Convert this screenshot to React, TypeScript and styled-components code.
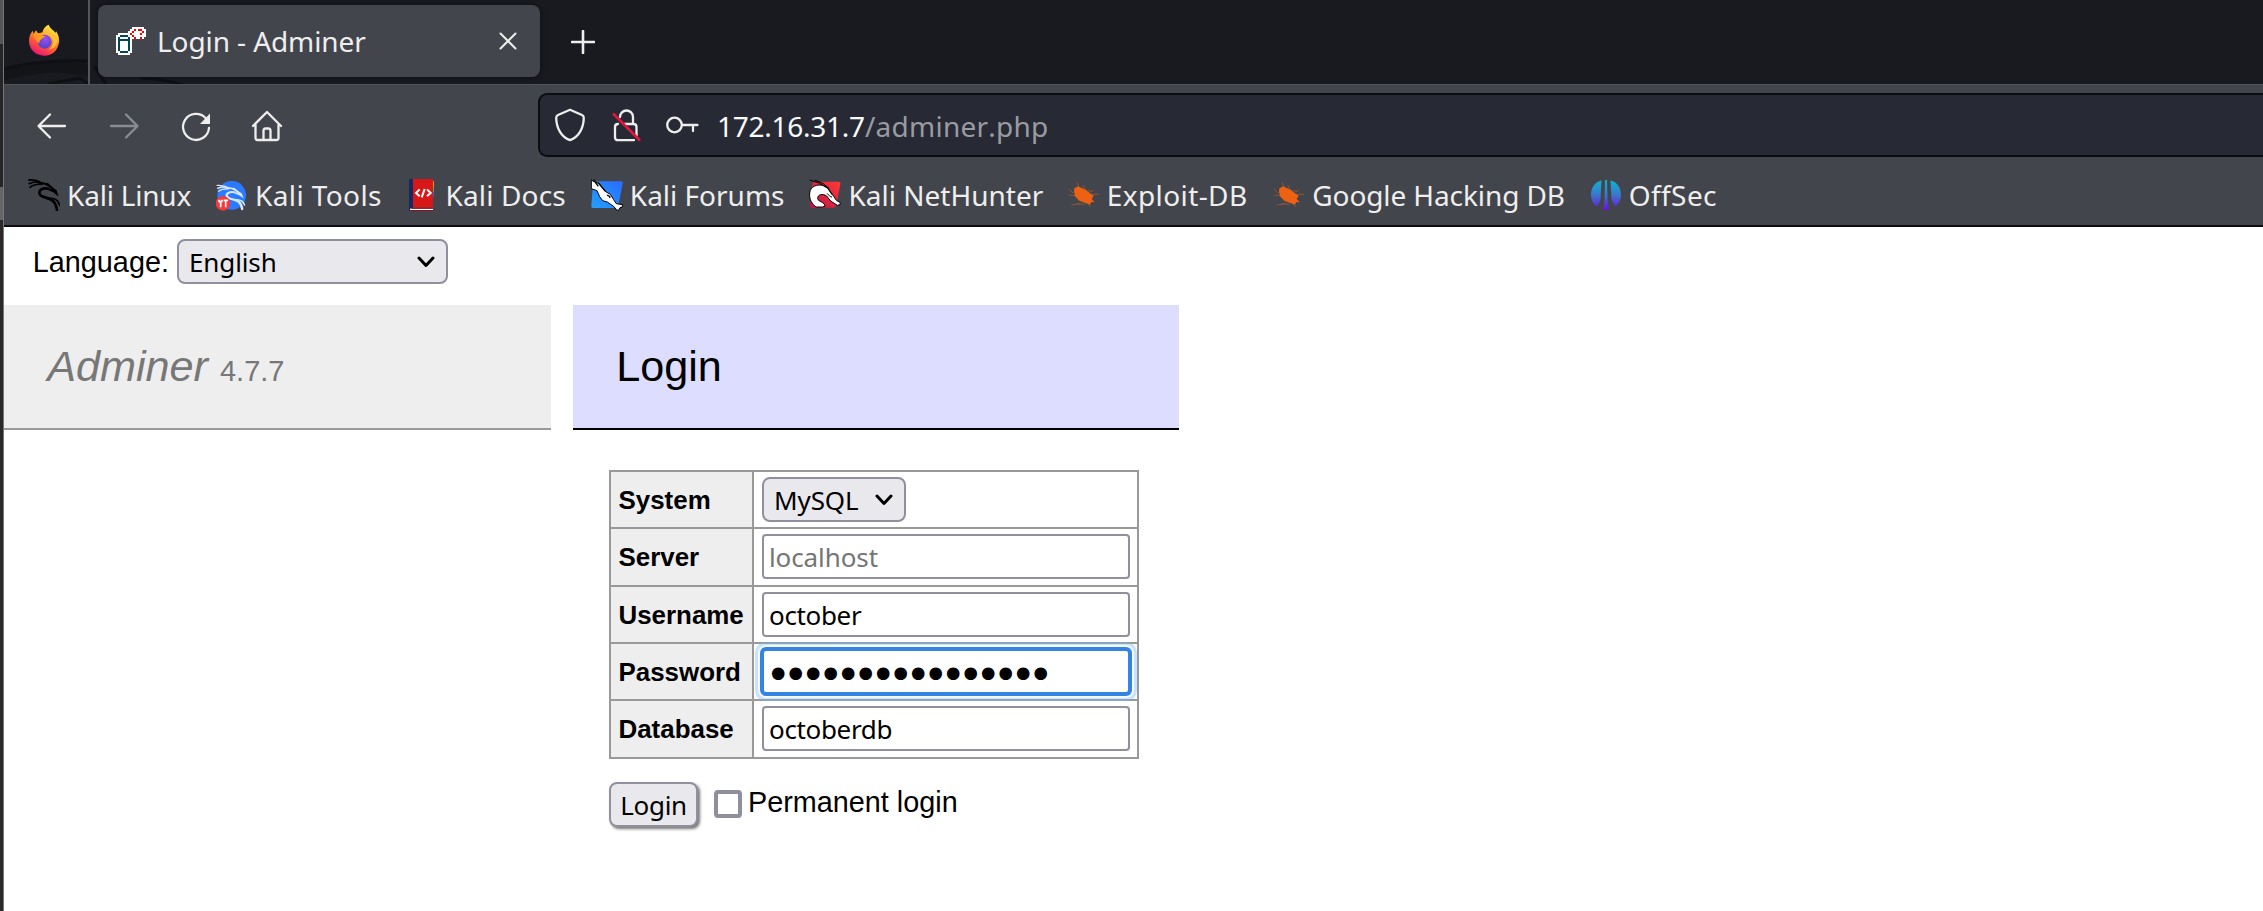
import React from "react";
import styled, { createGlobalStyle } from "styled-components";

const Global = createGlobalStyle`
  * { box-sizing: border-box; }
  body { margin: 0; background: #fff; overflow: hidden; }
  svg { display: block; flex: none; }
`;

const ui = `"Noto Sans", sans-serif`;
const sans = `"Liberation Sans", Arial, sans-serif`;

const Screen = styled.div`
  display: flex;
  width: 2263px;
  height: 911px;
  overflow: hidden;
`;
const DesktopEdge = styled.div`
  flex: none;
  width: 4px;
  border-right: 1px solid #777;
  background: linear-gradient(#565656 0 44px, #262628 44px 187px, #666 187px 220px, #2b2928 220px);
`;
const Browser = styled.div`
  flex: 1;
  display: flex;
  flex-direction: column;
  min-width: 0;
`;

/* tab strip */
const TabStrip = styled.div`
  height: 84px;
  display: flex;
  background: #191a1f;
  position: relative;
`;
const Wallpaper = styled.svg`
  position: absolute;
  left: 0;
  top: 54px;
`;
const FirefoxView = styled.div`
  position: relative;
  width: 86px;
  padding: 24px 0 0 24px;
  border-right: 2px solid #55565b;
`;
const Tab = styled.div`
  position: relative;
  margin: 5px 0 0 8px;
  flex: 0 0 442px;
  height: 72px;
  border-radius: 8px;
  background: #43454d;
  box-shadow: 0 0 5px rgba(0, 0, 0, 0.55);
  display: flex;
  align-items: center;
  padding: 0 23px 0 18px;
`;
const TabTitle = styled.span`
  flex: 1;
  margin-left: 9px;
  font: 28px ${ui};
  line-height: 38px;
  letter-spacing: -0.1px;
  color: #eeeeec;
`;
const NewTab = styled.div`
  padding: 30px 0 0 31px;
`;

/* navigation */
const NavBar = styled.div`
  height: 83px;
  flex: none;
  display: flex;
  background: #43454d;
  border-top: 1px solid #50525a;
  padding-top: 8px;
`;
const NavIcons = styled.div`
  width: 534px;
  display: flex;
  gap: 32px;
  padding: 13px 0 0 28px;
`;
const UrlBar = styled.div`
  flex: 1;
  height: 64px;
  border: 2px solid #0c0d11;
  border-right: 0;
  border-radius: 9px 0 0 9px;
  background: #272935;
  display: flex;
  align-items: center;
  padding-left: 14px;
`;
const UrlIcon = styled.div<{ $w: number }>`
  width: ${(p) => p.$w}px;
`;
const UrlText = styled.span`
  margin-top: 2px;
  font: 28px ${ui};
  line-height: 38px;
  font-kerning: none;
  letter-spacing: 0.25px;
  color: #9a9ba1;
  b { font-weight: 400; color: #fbfbfe; letter-spacing: -0.25px; }
`;

/* bookmarks */
const Bookmarks = styled.div`
  height: 60px;
  flex: none;
  display: flex;
  gap: 23px;
  padding: 9px 0 0 24px;
  background: #43454d;
  border-bottom: 2px solid #0c0c12;
`;
const Bookmark = styled.div`
  display: flex;
  align-items: center;
  gap: 7px;
  height: 38px;
`;
const BookmarkName = styled.span<{ $w: number; $ls: number }>`
  width: ${(p) => p.$w}px;
  white-space: nowrap;
  font: 28px ${ui};
  line-height: 38px;
  letter-spacing: ${(p) => p.$ls}px;
  color: #eeeeec;
`;

/* page */
const Page = styled.div`
  flex: 1;
  background: #fff;
  color: #000;
  font: 28.8px/36px ${sans};
`;
const LanguageRow = styled.div`
  height: 78px;
  padding: 12px 0 0 28.8px;
  display: flex;
  gap: 8px;
  line-height: 47px;
`;
const SelectBox = styled.button<{ $w: number }>`
  width: ${(p) => p.$w}px;
  height: 45px;
  border: 2px solid #8f8f9d;
  border-radius: 8px;
  background: #e9e9ed;
  padding: 0 11px 0 10px;
  display: flex;
  align-items: center;
  justify-content: space-between;
  font: 26px ${ui};
  line-height: 36px;
  letter-spacing: -0.1px;
  color: #000;
`;
const Columns = styled.div`
  display: flex;
  gap: 22px;
  align-items: flex-start;
`;
const Brand = styled.h1`
  margin: 0;
  width: 547px;
  height: 125px;
  padding: 33.5px 43.2px;
  background: #eee;
  border-bottom: 2px solid #999;
  color: #777;
  font: italic 43.2px/54px ${sans};
`;
const Version = styled.span`
  font-style: normal;
  font-size: 28.94px;
`;
const Heading = styled.h2`
  margin: 0;
  width: 606px;
  height: 125px;
  padding: 33.5px 43.2px;
  background: #ddf;
  border-bottom: 2px solid #000;
  font: 43.2px/54px ${sans};
`;
const Form = styled.form`
  margin: 40px 0 0 36px;
`;
const Table = styled.div`
  width: 530px;
  height: 289px;
  display: grid;
  grid-template-columns: 141px 383px;
  grid-template-rows: 55px 56px 55px 55px 56px;
  gap: 2px;
  padding: 2px;
  background: #999;
`;
const Label = styled.div`
  background: #eee;
  padding: 1px 0 0 7.5px;
  display: flex;
  align-items: center;
  font: bold 25.92px ${sans};
`;
const Cell = styled.div`
  background: #fff;
  padding: 5px 0 0 8px;
`;
const Field = styled.input<{ $ls?: number }>`
  display: block;
  width: 368px;
  height: 45px;
  border: 2px solid #8f8f9d;
  border-radius: 4px;
  outline: 0;
  background: #fff;
  padding: 1px 5px 0;
  color: #000;
  font: 26px ${ui};
  letter-spacing: ${(p) => p.$ls ?? 0}px;
  &::placeholder { color: #757575; opacity: 1; }
`;
const PasswordField = styled.div`
  width: 368px;
  height: 45px;
  position: relative;
  border: 2px solid #3584e4;
  border-radius: 4px;
  background: #fff;
  box-shadow: 0 0 0 2px #3584e4, 0 0 0 4px #f4f9fe, 0 0 0 7px rgba(120, 185, 245, 0.4);
  padding-left: 7px;
  font: 16.5px "DejaVu Sans", sans-serif;
  line-height: 43px;
  letter-spacing: 3.1px;
`;
const Actions = styled.div`
  display: flex;
  margin-top: 23px;
  height: 46px;
`;
const Submit = styled.button`
  width: 89px;
  height: 45px;
  border: 2px solid #8f8f9d;
  border-radius: 8px;
  background: #e9e9ed;
  padding: 0;
  color: #000;
  font: 26px ${ui};
  line-height: 36px;
  letter-spacing: -0.3px;
  box-shadow: 2px 2px 3px #777;
`;
const Check = styled.span`
  width: 28px;
  height: 28px;
  margin: 8px 6px 0 16px;
  border: 4px solid #8f8f9d;
  border-radius: 4px;
`;
const CheckLabel = styled.label`
  margin-top: 2px;
  line-height: 36px;
`;

const Firefox = () => (
  <svg width="32" height="32" viewBox="0 0 96 96">
    <defs>
      <linearGradient id="fx" x1=".8" y1="0" x2=".3" y2="1">
        <stop offset="0" stopColor="#fff44f" /><stop offset=".35" stopColor="#ffb02a" />
        <stop offset=".65" stopColor="#ff5a36" /><stop offset="1" stopColor="#f0107a" />
      </linearGradient>
      <radialGradient id="fp" cx=".55" cy=".3" r=".7"><stop offset="0" stopColor="#a34bf0" /><stop offset="1" stopColor="#4a47c8" /></radialGradient>
    </defs>
    <path d="M62 2C66 14 76 17 82 26c2 0 2-5 2-5 8 12 10 22 9 32C90 80 72 95 49 95 22 95 3 75 3 51 3 38 7 28 14 20l3 9 7-10 6 9c6-1 10-2 14-3 0-8 8-20 18-23z" fill="url(#fx)" />
    <circle cx="50" cy="53" r="21" fill="url(#fp)" />
    <path d="M17 32c7-5 14-6 20-3 5 5 10 6 15 8-4 5-8 4-11 8-3 1-8 6-7 13-7-5-16-14-17-26z" fill="#ff9a1f" />
    <path d="M58 30c10 3 15 9 17 16 4 12-3 26-14 31 16-1 26-14 26-29-4-7-8-12-16-14z" fill="#ffc233" />
  </svg>
);

const AdminerIcon = () => (
  <svg width="32" height="32" viewBox="0 0 16 16" shapeRendering="crispEdges">
    <path d="M1 4h5V3h1V2h1V1h6v1h1v4h-1v1H8v7H7v1H1v-1H0V5h1z" fill="#fff" />
    <path d="M2 5h4v1H2zM1 6h1v7H1zM6 6h1v7H6zM2 7h4v1H2zM2 13h4v1H2z" fill="#00475a" />
    <path d="M9 2h1v1H9zM8 3h1v1H8zM7 4h1v1H7zM8 5h1v1H8zM9 6h1v1H9zM11 2h2v1h-2zM13 3h1v1h-1zM12 4h1v1h-1zM12 6h1v1h-1z" fill="#f00" />
  </svg>
);

const line = { fill: "none", stroke: "#eeeeec", strokeWidth: 2.3, strokeLinecap: "round" as const, strokeLinejoin: "round" as const };

const Dragon = ({ c }: { c: string }) => (
  <g fill="none" stroke={c} strokeLinecap="round">
    <path d="M2 3c15-1 28 2 38 9M3 14c12-6 24-6 34-3M6 25c10-8 22-10 36-9" strokeWidth="5" />
    <path d="M34 12c12 0 28 6 36 15l13 8 3 9-8-6-14-6" strokeWidth="6" />
    <path d="M58 14l17 15" strokeWidth="5" />
    <path d="M60 29C44 25 31 34 35 45c4 12 28 9 40 21 8 8 11 17 12 28" strokeWidth="8" />
    <path d="M62 57c18 0 30 6 33 22" strokeWidth="5" />
  </g>
);

const KaliLinux = () => <svg width="32" height="32" viewBox="0 0 96 96"><Dragon c="#000" /></svg>;
const KaliTools = () => (
  <svg width="32" height="32" viewBox="0 0 96 96">
    <circle cx="47" cy="49" r="43" fill="#2a7bff" />
    <g transform="translate(2 17) scale(.88 .78)"><Dragon c="#d9e8ff" /></g>
    <circle cx="21" cy="73" r="22" fill="#f33a3e" />
    <path d="M9 62v5q3 3 5 1v17M18 62v5q-1 2-4 2M23 64h13M29 64v21" fill="none" stroke="#fff" strokeWidth="5" />
  </svg>
);
const KaliDocs = () => (
  <svg width="32" height="32" viewBox="0 0 96 96">
    <path d="M6 0h12v96H6z" fill="#132a63" />
    <path d="M18 0h60v86H18z" fill="#d81818" />
    <path d="M78 6h3v18h-3z" fill="#f08a24" /><path d="M78 24h3v16h-3z" fill="#4bae4f" /><path d="M78 40h3v14h-3z" fill="#3465c8" />
    <path d="M9 89h69v4H9z" fill="#fff" /><path d="M9 93h69v3H9zM15 86h63v3H15z" fill="#8f1020" />
    <path d="M38 31L27 42l11 10M60 31l11 11-11 10M53 30l-9 25" fill="none" stroke="#fff" strokeWidth="6" />
  </svg>
);
const KaliForums = () => (
  <svg width="32" height="32" viewBox="0 0 96 96">
    <defs><linearGradient id="kf" x1="0" y1="1" x2="1" y2="0"><stop offset="0" stopColor="#22a0ff" /><stop offset="1" stopColor="#2a6cff" /></linearGradient></defs>
    <path d="M12 7h78q6 0 5 6L82 80q-1 7-7 7H6q-6 0-5-6L6 14q0-7 6-7z" fill="url(#kf)" />
    <path d="M1 2l6 6 3-7 8 12 4-3 22 28 14 8 10 16 8 12 19 3-2 8-6 1-4 8-6-1-8-10-20-14-14-4-9-12-8-18L1 29z" fill="#fff" stroke="#000" strokeWidth="3" />
    <path d="M9 5l13 17M22 12l22 26M48 48l8 4 1 5" fill="none" stroke="#000" strokeWidth="4" />
  </svg>
);
const KaliNetHunter = () => (
  <svg width="32" height="32" viewBox="0 0 96 96">
    <defs><linearGradient id="nh" x1="0" y1="1" x2="1" y2="0"><stop offset="0" stopColor="#c0104a" /><stop offset="1" stopColor="#ff3a34" /></linearGradient></defs>
    <path d="M18 8h70q8 0 6 8L82 78q-2 8-8 8H8q-6 0-5-7l7-62q1-9 8-9z" fill="url(#nh)" />
    <path d="M2 42C4 22 24 14 44 20l12 6 18 26 8 12 12 7-1 6-8 2-20-13-12-15c-12-8-28-5-27 8 1 9 22 10 22 23l-8 2H21C10 74 0 64 2 42z" fill="#fff" stroke="#000" strokeWidth="3" />
    <path d="M2 3q30 6 54 25l14 20M17 3q28 8 44 26M54 43l10 10 5 1" fill="none" stroke="#000" strokeWidth="3" />
  </svg>
);
const Bug = () => (
  <svg width="32" height="32" viewBox="0 0 96 96">
    <g fill="none" stroke="#8f5537" strokeWidth="3">
      <path d="M27 10l6 16M44 18l8 14M3 30l12 12M2 48l20 2M60 34l12 4 4-6M70 46h24M10 78l28-4M26 74l24 2M60 74l8 10" />
    </g>
    <path d="M19 28l12-6 8 4 14 6 12 10 12 8-6 10 9 10-10-1-4 8-16-6-16-6-12-12-4-14z" fill="#ec6112" />
  </svg>
);
const OffSec = () => (
  <svg width="32" height="32" viewBox="0 0 32 32">
    <defs><linearGradient id="os" gradientUnits="userSpaceOnUse" x1="0" y1="1" x2="0" y2="31"><stop offset="0" stopColor="#0fb5cf" /><stop offset=".5" stopColor="#3a76cc" /><stop offset="1" stopColor="#6a12d8" /></linearGradient></defs>
    <path d="M11.500 1.500C5 3 1 8.500 1 16c0 5 2 8.500 6 12l3.500-7zM20.500 1.500C27 3 31 8.500 31 16c0 5-2 8.500-6 12l-3.500-7zM15 1h2l.6 21 1.400 9h-6l1.400-9z" fill="url(#os)" />
  </svg>
);

const bookmarks: { name: string; Icon: () => React.JSX.Element; w: number; ls: number }[] = [
  { name: "Kali Linux", Icon: KaliLinux, w: 126, ls: -0.2 },
  { name: "Kali Tools", Icon: KaliTools, w: 128.5, ls: 0.4 },
  { name: "Kali Docs", Icon: KaliDocs, w: 122.3, ls: 0.15 },
  { name: "Kali Forums", Icon: KaliForums, w: 156.7, ls: 0 },
  { name: "Kali NetHunter", Icon: KaliNetHunter, w: 196.3, ls: 0 },
  { name: "Exploit-DB", Icon: Bug, w: 143.5, ls: 0.4 },
  { name: "Google Hacking DB", Icon: Bug, w: 254.5, ls: -0.1 },
  { name: "OffSec", Icon: OffSec, w: 90, ls: 0.4 },
];

const Select = ({ w, children }: { w: number; children: string }) => (
  <SelectBox type="button" $w={w}>
    {children}
    <svg width="18" height="12" viewBox="0 0 18 12"><path d="M2 2l7 7.500L16 2" fill="none" stroke="#000" strokeWidth="3" strokeLinecap="round" strokeLinejoin="round" /></svg>
  </SelectBox>
);

export default function App() {
  return (
    <Screen>
      <Global />
      <DesktopEdge />
      <Browser>
        <TabStrip>
          <Wallpaper width="200" height="30" viewBox="4 54 200 30">
            <path d="M4 68C30 62 60 60 84 61L90 68V76L66 73C50 71 30 74 4 80z" fill="#131418" />
            <path d="M4 69C30 62 60 60 88 61M48 84l32-6 8 6M94 66l12 18M140 78q26 1 42 7" stroke="#0f1013" strokeWidth="3" fill="none" />
          </Wallpaper>
          <FirefoxView><Firefox /></FirefoxView>
          <Tab>
            <AdminerIcon />
            <TabTitle>Login - Adminer</TabTitle>
            <svg width="18" height="18" viewBox="0 0 18 18"><path d="M1.500 1.500l15 15M16.500 1.500l-15 15" {...line} strokeWidth="2" /></svg>
          </Tab>
          <NewTab><svg width="24" height="24" viewBox="0 0 24 24"><path d="M12 1v22M1 12h22" {...line} strokeWidth="2.600" /></svg></NewTab>
        </TabStrip>
        <NavBar>
          <NavIcons>
            <svg width="40" height="40" viewBox="0 0 40 40"><path d="M33 20H7M18 8.500L6.500 20 18 31.500" {...line} /></svg>
            <svg width="40" height="40" viewBox="0 0 40 40"><path d="M7 20h26M22 8.500L33.500 20 22 31.500" {...line} stroke="#8b8c90" /></svg>
            <svg width="40" height="40" viewBox="0 0 40 40"><path d="M33 22A13 13 0 1 1 29.500 12" {...line} /><path d="M34 7.500V18H24z" fill="#eeeeec" /></svg>
            <svg width="40" height="40" viewBox="0 0 40 40"><path d="M5 20L19 6l14 14M7.500 18.500V32q0 2 2 2h19q2 0 2-2V18.500M15.500 34v-9q0-2.500 2-2.500h3q2 0 2 2.500v9" {...line} /></svg>
          </NavIcons>
          <UrlBar>
            <UrlIcon $w={56}><svg width="32" height="34" viewBox="0 0 32 34"><path d="M16 1.800L28 7q1.800.8 1.800 3C29.500 20 25 29 16 32.200 7 29 2.500 20 2.200 10q0-2.200 1.800-3z" {...line} /></svg></UrlIcon>
            <UrlIcon $w={55}>
              <svg width="32" height="34" viewBox="0 0 32 34">
                <path d="M10 9a6.500 6.500 0 0 1 13 0v7M14 16h9.500q3 0 3 3v9M24 32.200H8q-3 0-3-3V19q0-3 3-3" {...line} />
                <path d="M3 5.500L30 32.500" stroke="#e8143c" strokeWidth="2.500" />
              </svg>
            </UrlIcon>
            <UrlIcon $w={52}><svg width="34" height="18" viewBox="0 0 34 18"><circle cx="9.500" cy="9" r="7.300" {...line} /><path d="M17 9h15.500M28 9v6" {...line} /></svg></UrlIcon>
            <UrlText><b>172.16.31.7</b>/adminer.php</UrlText>
          </UrlBar>
        </NavBar>
        <Bookmarks>
          {bookmarks.map(({ name, Icon, w, ls }) => (
            <Bookmark key={name}><Icon /><BookmarkName $w={w} $ls={ls}>{name}</BookmarkName></Bookmark>
          ))}
        </Bookmarks>
        <Page>
          <LanguageRow>Language: <Select w={271}>English</Select></LanguageRow>
          <Columns>
            <Brand>Adminer <Version>4.7.7</Version></Brand>
            <div>
              <Heading>Login</Heading>
              <Form>
                <Table>
                  <Label>System</Label><Cell><Select w={144}>MySQL</Select></Cell>
                  <Label>Server</Label><Cell><Field placeholder="localhost" $ls={-0.1} /></Cell>
                  <Label>Username</Label><Cell><Field defaultValue="october" $ls={-0.35} /></Cell>
                  <Label>Password</Label><Cell><PasswordField>{"●".repeat(16)}</PasswordField></Cell>
                  <Label>Database</Label><Cell><Field defaultValue="octoberdb" $ls={-0.35} /></Cell>
                </Table>
                <Actions>
                  <Submit type="button">Login</Submit>
                  <Check />
                  <CheckLabel>Permanent login</CheckLabel>
                </Actions>
              </Form>
            </div>
          </Columns>
        </Page>
      </Browser>
    </Screen>
  );
}
